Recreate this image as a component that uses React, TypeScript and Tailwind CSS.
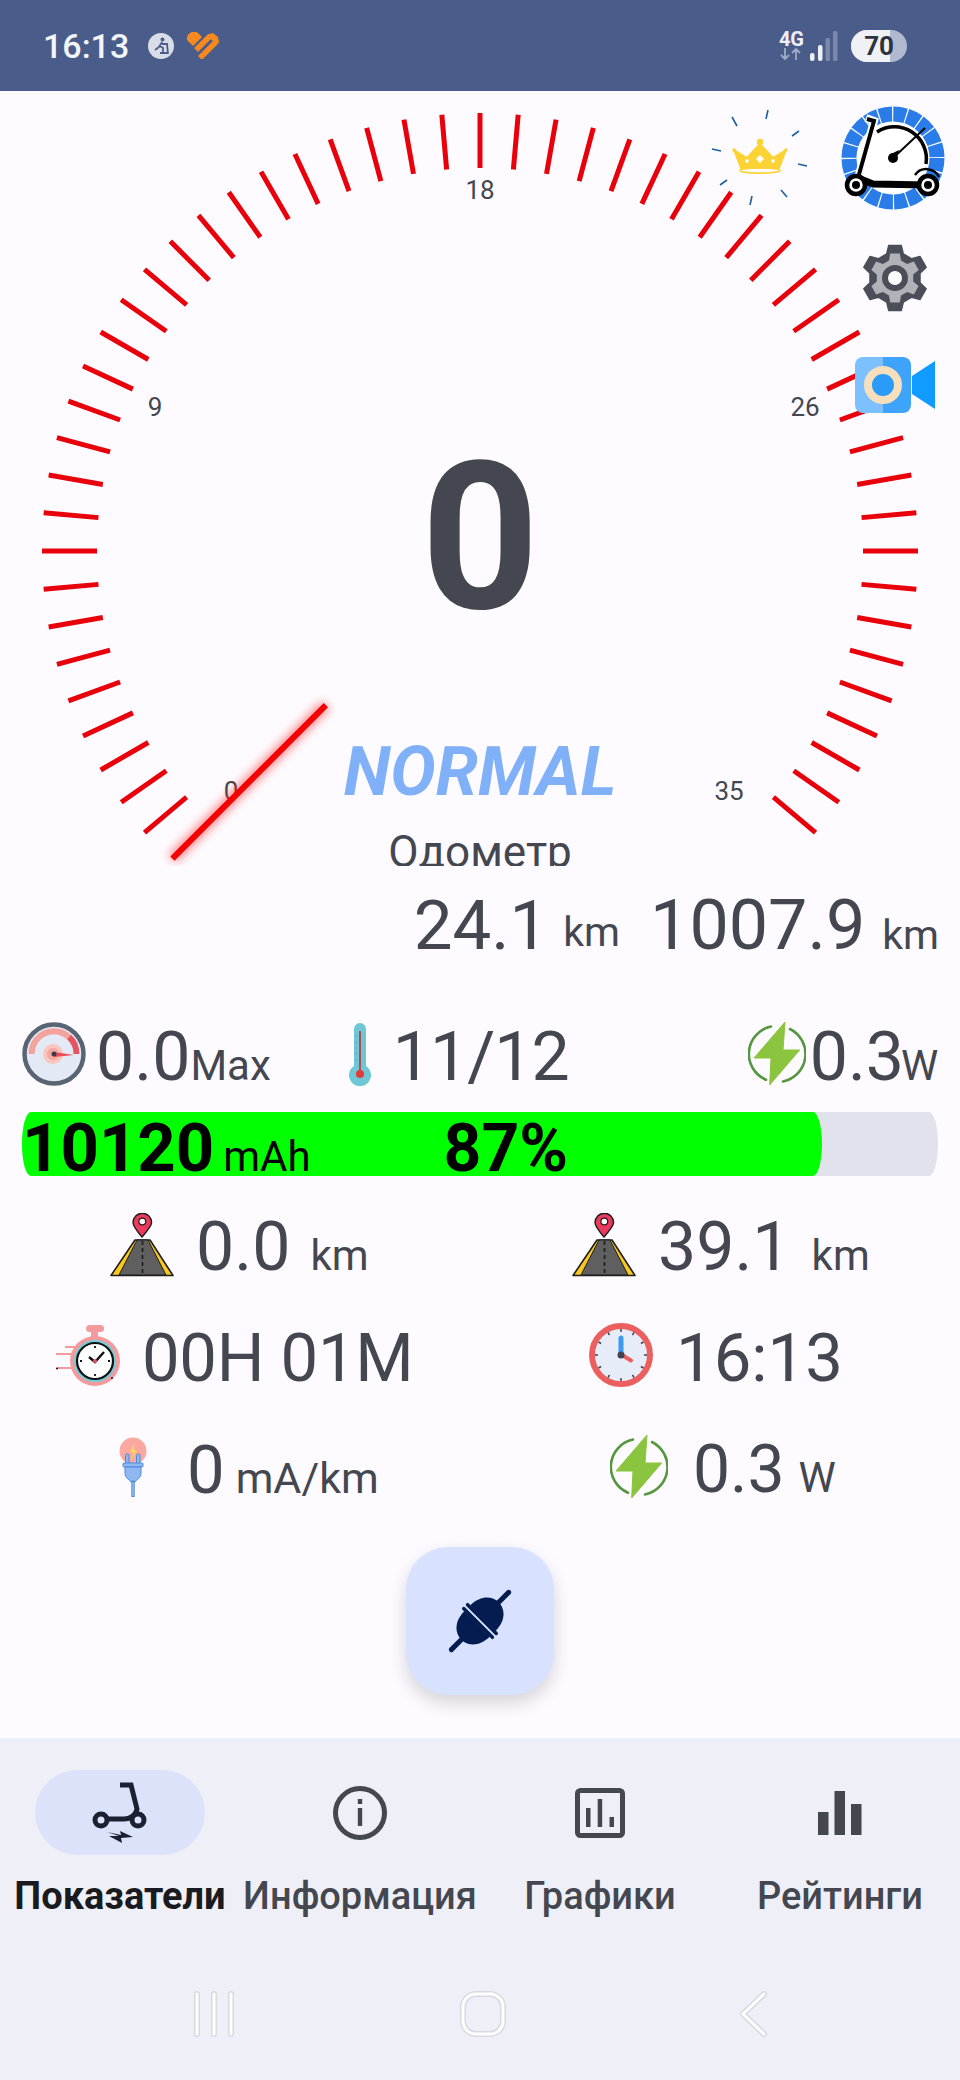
const ticks = Array.from({ length: 53 }, (_, i) => -130 + i * 5)

const polar = (deg: number, r: number, cx = 480, cy = 460) => {
  const a = (deg * Math.PI) / 180
  return { x: cx + r * Math.sin(a), y: cy - r * Math.cos(a) }
}

const gearPath = (outer: number, root: number, c: number) => {
  const pts: string[] = []
  for (let i = 0; i < 6; i++) {
    const a = i * 60
    const p = [
      polar(a - 19, root, c, c),
      polar(a - 11, outer, c, c),
      polar(a + 11, outer, c, c),
      polar(a + 19, root, c, c),
    ]
    p.forEach((q) => pts.push(`${q.x.toFixed(1)} ${q.y.toFixed(1)}`))
  }
  return `M${pts.join('L')}Z`
}

const GaugeMarks = () => {
  const a = polar(-135, 435)
  const b = polar(-135, 218)
  return (
    <svg className="absolute left-0 top-0" width="960" height="775" viewBox="0 0 960 775">
      <defs>
        <filter id="needle-glow" x="-20%" y="-20%" width="140%" height="140%">
          <feGaussianBlur stdDeviation="5" />
        </filter>
      </defs>
      {ticks.map((deg) => {
        const p = polar(deg, 438)
        const q = polar(deg, 383)
        return <line key={deg} x1={p.x} y1={p.y} x2={q.x} y2={q.y} stroke="#e8000b" strokeWidth="5" />
      })}
      <line x1={a.x} y1={a.y} x2={b.x} y2={b.y} stroke="#ff2020" strokeWidth="11" opacity="0.55" filter="url(#needle-glow)" />
      <line x1={a.x} y1={a.y} x2={b.x} y2={b.y} stroke="#f40000" strokeWidth="6" />
    </svg>
  )
}

const ScooterLogo = () => (
  <svg width="104" height="104" viewBox="0 0 104 104">
    <circle cx="52" cy="52" r="51.5" fill="#fff" />
    <circle cx="52" cy="52" r="44" fill="none" stroke="#2a7de8" strokeWidth="15" strokeDasharray="12.6 1.22" />
    <path d="M36 26 A32 32 0 0 1 85 58" fill="none" stroke="#000" strokeWidth="3.5" />
    <path d="M51 53 L84 22" stroke="#000" strokeWidth="2" />
    <path d="M48 49 L58 44 L55 54 Z" fill="#000" />
    <circle cx="52" cy="52" r="5" fill="#000" />
    <path d="M25 12 L33 15 L17 72" fill="none" stroke="#fff" strokeWidth="8" />
    <path d="M26 13 L33 15 L17 72" fill="none" stroke="#000" strokeWidth="4" />
    <path d="M17 72 L32 78 L86 79" fill="none" stroke="#000" strokeWidth="7" />
    <path d="M74 69 A14 14 0 0 1 98 71" fill="none" stroke="#000" strokeWidth="2.5" />
    <circle cx="15" cy="79" r="9" fill="#fff" stroke="#000" strokeWidth="4.5" />
    <circle cx="15" cy="79" r="4" fill="#000" />
    <circle cx="87" cy="79" r="9" fill="#fff" stroke="#000" strokeWidth="4.5" />
    <circle cx="87" cy="79" r="4" fill="#000" />
  </svg>
)

const Crown = () => (
  <svg width="100" height="100" viewBox="0 0 100 100">
    <g stroke="#1d5f9e" strokeWidth="1.6">
      <path d="M58 1 L56 10" />
      <path d="M22 8 L27 17" />
      <path d="M89 22 L82 27" />
      <path d="M2 40 L11 42" />
      <path d="M97 57 L88 55" />
      <path d="M10 76 L17 71" />
      <path d="M42 87 L40 96" />
      <path d="M71 81 L77 88" />
    </g>
    <path d="M24 41 L37 49 L50 35 L63 49 L76 41 L69 59 L31 59 Z" fill="#fbd335" stroke="#fbd335" strokeWidth="2" strokeLinejoin="round" />
    <circle cx="50" cy="33" r="3.2" fill="#fbd335" />
    <circle cx="24" cy="41" r="1.8" fill="#fbd335" />
    <circle cx="76" cy="41" r="1.8" fill="#fbd335" />
    <path d="M50 46 L54 50 L50 54 L46 50 Z" fill="#fff" />
    <circle cx="37" cy="52" r="1.8" fill="#fff" />
    <circle cx="63" cy="52" r="1.8" fill="#fff" />
    <ellipse cx="50" cy="61.5" rx="20" ry="2.6" fill="none" stroke="#fbd335" strokeWidth="1.6" />
  </svg>
)

const Gear = () => (
  <svg width="66" height="68" viewBox="0 0 66 66">
    <path d={gearPath(33, 25.5, 33)} fill="#4b4e58" stroke="#4b4e58" strokeWidth="1.5" strokeLinejoin="round" />
    <path d={gearPath(25, 18.5, 33)} fill="#b0b2b8" strokeLinejoin="round" />
    <circle cx="33" cy="33" r="10" fill="#fff" stroke="#4b4e58" strokeWidth="6" />
  </svg>
)

const Camera = () => (
  <svg width="80" height="56" viewBox="0 0 80 56">
    <path d="M8 0 H28 V56 H8 A8 8 0 0 1 0 48 V8 A8 8 0 0 1 8 0 Z" fill="#7cc0ff" />
    <path d="M28 0 H48 A8 8 0 0 1 56 8 V48 A8 8 0 0 1 48 56 H28 Z" fill="#3ea4fb" />
    <path d="M57 19 L80 4 V52 L57 37 Z" fill="#0f9bff" />
    <circle cx="28" cy="28" r="15" fill="#2a9bf8" stroke="#f6dfbd" strokeWidth="8" />
  </svg>
)

const SpeedIcon = () => (
  <svg className="self-start -mt-px" width="64" height="64" viewBox="0 0 64 64">
    <circle cx="32" cy="32" r="29.5" fill="#e4eaf5" stroke="#5a6573" strokeWidth="4.5" />
    <path d="M9.5 32 A22.5 22.5 0 0 1 47 15" fill="none" stroke="#f3a39c" strokeWidth="6" />
    <path d="M47 15 A22.5 22.5 0 0 1 54.5 32" fill="none" stroke="#e4555f" strokeWidth="6" />
    <circle cx="31" cy="32" r="10" fill="#f9c5bd" />
    <circle cx="31" cy="32" r="6" fill="#f4a8a0" />
    <path d="M32 30 L52 33 L32 35 Z" fill="#ee4a55" />
    <circle cx="32" cy="32" r="2.5" fill="#3a3f4a" />
  </svg>
)

const ThermoIcon = () => (
  <svg className="self-start -mt-px" width="22" height="64" viewBox="0 0 22 64">
    <path d="M5 7 A6 6 0 0 1 17 7 V44 A11 11 0 1 1 5 44 Z" fill="#6fc7d6" />
    <path d="M11 9 V48" stroke="#b14d50" strokeWidth="2" />
    <circle cx="11" cy="52" r="4" fill="#e53935" />
    <path d="M6.5 14 H8 M6.5 20 H8 M6.5 26 H8 M6.5 32 H8 M6.5 38 H8" stroke="#4b9aab" strokeWidth="1.2" />
  </svg>
)

const BoltIcon = ({ extra = '' }: { extra?: string }) => (
  <svg className={`self-start ${extra}`} width="58" height="64" viewBox="0 0 58 64">
    <path d="M23 4.5 A28 28 0 0 0 18 57.7" fill="none" stroke="#55963f" strokeWidth="2.6" strokeLinecap="round" />
    <path d="M42 7 A28 28 0 0 1 35 59.5" fill="none" stroke="#55963f" strokeWidth="2.6" strokeLinecap="round" />
    <path d="M37 0 L6 36 L23 36 L21.7 63 L51.7 28 L35 28 Z" fill="#8bc53f" stroke="#8bc53f" strokeLinejoin="round" />
  </svg>
)

const RoadIcon = () => (
  <svg className="self-start" width="64" height="64" viewBox="0 0 64 64">
    <path d="M1 62.5 L25 27 H40 L63 62.5 Z" fill="#f9c81e" stroke="#1d1d1d" strokeWidth="1.6" strokeLinejoin="round" />
    <path d="M9 62 L27 27 H38 L56 62 Z" fill="#5f5f5f" stroke="#1d1d1d" strokeWidth="1" />
    <path d="M32.5 28 V62" stroke="#1d1d1d" strokeWidth="1.6" strokeDasharray="4 3" />
    <path d="M32 24 C26 17 23 13 23 9.5 A9.3 9.3 0 0 1 41.6 9.5 C41.6 13 38 17 32 24 Z" fill="#ec3a5c" stroke="#1d1d1d" strokeWidth="1.4" />
    <circle cx="32.3" cy="8.5" r="3.4" fill="#fff" stroke="#1d1d1d" strokeWidth="1.2" />
  </svg>
)

const TimerIcon = () => (
  <svg className="self-start mt-px" width="64" height="62" viewBox="0 0 64 62">
    <rect x="30" y="0" width="18" height="7" rx="3.5" fill="#f49a9c" />
    <rect x="35" y="6" width="7" height="6" fill="#f49a9c" />
    <circle cx="39" cy="36" r="25" fill="#f49a9c" />
    <circle cx="39" cy="36" r="21" fill="#6dd0dd" />
    <circle cx="39" cy="36" r="18" fill="#fff" stroke="#111" strokeWidth="2.2" />
    <path d="M9 22 H20 M0 29 H17 M1 43 H16" stroke="#f49a9c" strokeWidth="2" />
    <path d="M33 32 L39 37 L48 27" fill="none" stroke="#111" strokeWidth="2.4" />
    <circle cx="39" cy="36" r="2" fill="#e4555f" />
    <path d="M39 21 V23 M39 49 V51 M24 36 H26 M52 36 H54" stroke="#111" strokeWidth="1.8" />
    <circle cx="1" cy="43.5" r="1" fill="#111" />
    <circle cx="56" cy="53" r="1" fill="#111" />
  </svg>
)

const ClockIcon = () => (
  <svg className="self-start -mt-px" width="64" height="64" viewBox="0 0 64 64">
    <circle cx="32" cy="32" r="29" fill="#e6edf8" stroke="#ec5f5f" strokeWidth="6" />
    {Array.from({ length: 12 }, (_, i) => {
      const p = polar(i * 30, 26, 32, 32)
      const q = polar(i * 30, 23, 32, 32)
      return <line key={i} x1={p.x} y1={p.y} x2={q.x} y2={q.y} stroke="#3d4450" strokeWidth="1.5" />
    })}
    <path d="M32 31 V15" stroke="#3b9bf0" strokeWidth="5" strokeLinecap="round" />
    <path d="M33 32 L42 37.5" stroke="#ec5f5f" strokeWidth="4" strokeLinecap="round" />
    <circle cx="32" cy="32" r="3.5" fill="#3d4450" />
  </svg>
)

const PlugIcon = () => (
  <svg className="self-start mt-px" width="28" height="60" viewBox="0 0 28 60">
    <circle cx="14" cy="14" r="13.5" fill="#f9a9a0" />
    <path d="M15 7 L11 15 H14 L13 22 L18 13 H15 Z" fill="#fbd75b" />
    <rect x="6.5" y="17" width="3.5" height="10" rx="1.5" fill="#8fb8f2" stroke="#4a89dc" />
    <rect x="17.5" y="17" width="3.5" height="10" rx="1.5" fill="#8fb8f2" stroke="#4a89dc" />
    <rect x="4" y="26" width="20" height="4" rx="1" fill="#8fb8f2" stroke="#4a89dc" />
    <path d="M6 30 H22 V36 C22 41 18 42 16 45 H12 C10 42 6 41 6 36 Z" fill="#8fb8f2" stroke="#4a89dc" />
    <path d="M14 45 V59" stroke="#4a89dc" strokeWidth="3.4" strokeLinecap="round" />
    <path d="M14 45 V59" stroke="#a7cbf7" strokeWidth="1.2" />
  </svg>
)

const UnplugIcon = () => (
  <svg width="80" height="80" viewBox="-40 -40 80 80">
    <g transform="rotate(45)" fill="#041c4f">
      <rect x="-2.5" y="-43" width="5" height="20" rx="2.5" />
      <rect x="-2.5" y="23" width="5" height="20" rx="2.5" />
      <path d="M-18 -4 C-18 -34 18 -34 18 -4 Z" />
      <path d="M-18 4 C-18 34 18 34 18 4 Z" />
      <rect x="-22" y="-4.5" width="44" height="3.5" rx="1.7" />
      <rect x="-22" y="1" width="44" height="3.5" rx="1.7" />
    </g>
  </svg>
)

const NavScooter = () => (
  <svg width="60" height="64" viewBox="0 0 60 64">
    <path d="M30 4 H41 L47 28 C46 34 40 38 34 38 H17" fill="none" stroke="#1b2130" strokeWidth="5" />
    <circle cx="11" cy="39" r="6" fill="#dbe2f9" stroke="#1b2130" strokeWidth="5" />
    <circle cx="48" cy="39" r="6" fill="#dbe2f9" stroke="#1b2130" strokeWidth="5" />
    <path d="M17 51 L31 54 L30 50 L43 56 L31 57 L32 62 L19 55 L29 55 Z" fill="#1b2130" />
  </svg>
)

const NavInfo = () => (
  <svg width="54" height="54" viewBox="0 0 54 54">
    <circle cx="27" cy="27" r="24.5" fill="none" stroke="#44474f" strokeWidth="5" />
    <rect x="24.8" y="13" width="4.4" height="5" fill="#44474f" />
    <rect x="24.8" y="22" width="4.4" height="18" fill="#44474f" />
  </svg>
)

const NavChart = () => (
  <svg width="50" height="50" viewBox="0 0 50 50">
    <rect x="2.5" y="2.5" width="45" height="45" rx="3" fill="none" stroke="#44474f" strokeWidth="5" />
    <rect x="11" y="20" width="4.5" height="19" fill="#44474f" />
    <rect x="22.7" y="11" width="4.5" height="28" fill="#44474f" />
    <rect x="34.5" y="29" width="4.5" height="10" fill="#44474f" />
  </svg>
)

const NavBars = () => (
  <svg width="44" height="44" viewBox="0 0 44 44">
    <rect x="0" y="21" width="10.5" height="23" fill="#44474f" />
    <rect x="16.5" y="0" width="10.5" height="44" fill="#44474f" />
    <rect x="33" y="13" width="10.5" height="31" fill="#44474f" />
  </svg>
)

const NavItem = ({ label, icon, active }: { label: string; icon: React.ReactNode; active?: boolean }) => (
  <div className="flex flex-col items-center">
    <div className={`flex h-[85px] w-[170px] items-center justify-center rounded-full ${active ? 'bg-[#dbe2f9]' : ''}`}>{icon}</div>
    <div className={`mt-[18px] whitespace-nowrap text-[38px] leading-[46px] ${active ? 'font-bold text-[#1a1b20]' : 'font-medium text-[#44474f]'}`}>
      {label}
    </div>
  </div>
)

const StatusBar = () => (
  <div className="flex h-[91px] shrink-0 items-center bg-[#4a5d8a] pl-[43px] pr-[53px]">
    <span className="text-[34px] font-medium leading-none text-[#f4f5f8]">16:13</span>
    <svg className="ml-[19px]" width="26" height="26" viewBox="0 0 26 26">
      <circle cx="13" cy="13" r="13" fill="#d9dde7" />
      <circle cx="14.5" cy="6.5" r="2" fill="#4a5d8a" />
      <path d="M14 9 L11 14 L7 17 M12 13 L15 15 V20 M14 11 H19 L20 21 M12 20 H20" fill="none" stroke="#4a5d8a" strokeWidth="1.8" />
    </svg>
    <svg className="ml-[13px]" width="33" height="27" viewBox="0 0 33 27">
      <path d="M0 8 A7 7 0 0 1 12 2 L15 5 L6 14 Z" fill="#f7891f" />
      <path d="M13 26 L28 11 A4.5 4.5 0 0 0 22 5 L9 18" fill="none" stroke="#f7891f" strokeWidth="5.5" />
      <path d="M20 3 L26 1 L31 5 L32 11 L28 11 Z" fill="#f7891f" />
    </svg>
    <div className="ml-auto flex flex-col items-center">
      <span className="text-[20px] font-bold leading-[17px] text-[#eef0f6]">4G</span>
      <svg width="22" height="12" viewBox="0 0 22 12">
        <path d="M5 0 V11 M1 7 L5 11 L9 7 M16 12 V1 M12 5 L16 1 L20 5" fill="none" stroke="#a1abc4" strokeWidth="1.8" />
      </svg>
    </div>
    <svg className="ml-[5px]" width="29" height="30" viewBox="0 0 29 30">
      <rect x="1" y="22" width="4.5" height="8" rx="2" fill="#eef0f6" />
      <rect x="9" y="14" width="4.5" height="16" rx="2" fill="#eef0f6" />
      <rect x="16.5" y="7" width="4.5" height="23" rx="1.5" fill="#7b88a9" />
      <rect x="24" y="0" width="4.5" height="30" rx="1.5" fill="#7b88a9" />
    </svg>
    <div className="ml-[13px] flex h-[32px] w-[56px] items-center overflow-hidden rounded-full bg-[#b1b9cf]">
      <div className="flex h-full w-[39px] items-center justify-end bg-[#f0f1f5]">
        <span className="-mr-[4px] text-[26px] font-bold leading-none text-[#2f3340]">70</span>
      </div>
    </div>
  </div>
)

export default function App() {
  return (
    <div className="flex h-[2080px] w-[960px] flex-col overflow-hidden bg-[#fdfbff] font-['Roboto',sans-serif] text-[#44474f]">
      <StatusBar />

      {/* gauge */}
      <div className="relative h-[775px] shrink-0 overflow-hidden">
        <span className="absolute left-[480px] top-[99px] -translate-x-1/2 -translate-y-1/2 text-[26px] leading-none">18</span>
        <span className="absolute left-[155px] top-[316px] -translate-x-1/2 -translate-y-1/2 text-[26px] leading-none">9</span>
        <span className="absolute left-[805px] top-[316px] -translate-x-1/2 -translate-y-1/2 text-[26px] leading-none">26</span>
        <span className="absolute left-[231px] top-[700px] -translate-x-1/2 -translate-y-1/2 text-[26px] leading-none">0</span>
        <span className="absolute left-[729px] top-[700px] -translate-x-1/2 -translate-y-1/2 text-[26px] leading-none">35</span>
        <GaugeMarks />
        <span className="absolute left-[480px] top-[447px] -translate-x-1/2 -translate-y-1/2 text-[206px] font-bold leading-none">0</span>
        <span className="absolute left-[480px] top-[681px] -translate-x-1/2 -translate-y-1/2 text-[68px] font-bold italic leading-none text-[#7fb0f8]">NORMAL</span>
        <span className="absolute left-[480px] top-[735px] -translate-x-1/2 text-[44px] leading-[52px]">Одометр</span>
        <div className="absolute left-[710px] top-[18px]"><Crown /></div>
        <div className="absolute left-[841px] top-[15px]"><ScooterLogo /></div>
        <div className="absolute left-[862px] top-[153px]"><Gear /></div>
        <div className="absolute left-[855px] top-[266px]"><Camera /></div>
      </div>

      {/* trip + odometer */}
      <div className="mt-[25px] flex h-[68px] items-baseline justify-end pr-[21px]">
        <span className="text-[69px] leading-[68px]">24.1</span>
        <span className="ml-[15px] -translate-y-[3px] text-[41px] leading-[41px]">km</span>
        <span className="ml-[30px] text-[70px] leading-[68px]">1007.9</span>
        <span className="ml-[17px] text-[41px] leading-[41px]">km</span>
      </div>

      {/* max, temperature, power */}
      <div className="mt-[64px] flex h-[68px] items-baseline pl-[22px]">
        <SpeedIcon />
        <span className="ml-[10px] text-[68px] leading-[68px]">0.0</span>
        <span className="text-[42px] leading-[42px]">Max</span>
        <span className="ml-[78px] flex self-start"><ThermoIcon /></span>
        <span className="ml-[22px] text-[68px] leading-[68px] tracking-[-1px]">11/12</span>
        <span className="ml-[179px] flex self-start"><BoltIcon extra="-mt-px" /></span>
        <span className="ml-[4px] text-[68px] leading-[68px]">0.3</span>
        <span className="-ml-[3px] text-[42px] leading-[42px]">W</span>
      </div>

      {/* battery */}
      <div className="mx-[22px] mt-[21px] h-[64px] shrink-0 rounded-[9px/32px] bg-[#e1e2ec]">
        <div className="flex h-full w-[800px] items-baseline rounded-[9px/32px] bg-[#00ff00] pt-[4px] text-black">
          <span className="text-[67px] font-bold leading-[64px]">10120</span>
          <span className="ml-[9px] text-[42px] leading-[42px]">mAh</span>
          <span className="ml-[133px] text-[66px] font-bold leading-[64px]">87%</span>
        </div>
      </div>

      {/* trip distance, range */}
      <div className="mt-[37px] grid h-[68px] grid-cols-2">
        <div className="flex items-baseline pl-[110px]">
          <RoadIcon />
          <span className="ml-[22px] text-[68px] leading-[68px]">0.0</span>
          <span className="ml-[20px] text-[42px] leading-[42px]">km</span>
        </div>
        <div className="flex items-baseline pl-[92px]">
          <RoadIcon />
          <span className="ml-[22px] text-[68px] leading-[68px]">39.1</span>
          <span className="ml-[21px] text-[42px] leading-[42px]">km</span>
        </div>
      </div>

      {/* ride time, clock */}
      <div className="mt-[43px] grid h-[68px] grid-cols-2">
        <div className="flex items-baseline pl-[56px]">
          <TimerIcon />
          <span className="ml-[22px] text-[67px] leading-[68px] tracking-[-0.3px]">00H 01M</span>
        </div>
        <div className="flex items-baseline pl-[109px]">
          <ClockIcon />
          <span className="ml-[23px] text-[67px] leading-[68px]">16:13</span>
        </div>
      </div>

      {/* consumption, power */}
      <div className="mt-[44px] grid h-[68px] grid-cols-2">
        <div className="flex items-baseline pl-[119px]">
          <PlugIcon />
          <span className="ml-[40px] text-[67px] leading-[68px]">0</span>
          <span className="ml-[11px] text-[43px] leading-[42px]">mA/km</span>
        </div>
        <div className="flex items-baseline pl-[130px]">
          <BoltIcon extra="-mt-px" />
          <span className="ml-[25px] text-[66px] leading-[68px]">0.3</span>
          <span className="ml-[14px] text-[42px] leading-[42px]">W</span>
        </div>
      </div>

      {/* connect */}
      <div className="mt-[43px] flex justify-center">
        <button type="button" className="flex h-[148px] w-[148px] items-center justify-center rounded-[42px] bg-[#d8e2ff] shadow-[0_8px_18px_rgba(0,0,0,0.16)]">
          <UnplugIcon />
        </button>
      </div>

      {/* bottom navigation */}
      <div className="mt-[43px] flex-1 bg-[#eff0f7] pt-[32px]">
        <div className="grid grid-cols-4">
          <NavItem label="Показатели" icon={<NavScooter />} active />
          <NavItem label="Информация" icon={<NavInfo />} />
          <NavItem label="Графики" icon={<NavChart />} />
          <NavItem label="Рейтинги" icon={<NavBars />} />
        </div>
        <div className="mt-[72px] flex items-center pl-[193px]">
          <svg width="42" height="46" viewBox="0 0 42 46" fill="none">
            <path d="M4 3 V43 M21 3 V43 M38 3 V43" stroke="#d9d9e1" strokeWidth="6" strokeLinecap="round" />
            <path d="M4 3 V43 M21 3 V43 M38 3 V43" stroke="#fff" strokeWidth="3" strokeLinecap="round" />
          </svg>
          <svg className="ml-[225px]" width="46" height="46" viewBox="0 0 46 46" fill="none">
            <rect x="3" y="3" width="40" height="40" rx="13" stroke="#d9d9e1" strokeWidth="6" />
            <rect x="3" y="3" width="40" height="40" rx="13" stroke="#fff" strokeWidth="3" />
          </svg>
          <svg className="ml-[233px]" width="28" height="46" viewBox="0 0 28 46" fill="none">
            <path d="M25 3 L4 23 L25 43" stroke="#d9d9e1" strokeWidth="6" strokeLinecap="round" strokeLinejoin="round" />
            <path d="M25 3 L4 23 L25 43" stroke="#fff" strokeWidth="3" strokeLinecap="round" strokeLinejoin="round" />
          </svg>
        </div>
      </div>
    </div>
  )
}
